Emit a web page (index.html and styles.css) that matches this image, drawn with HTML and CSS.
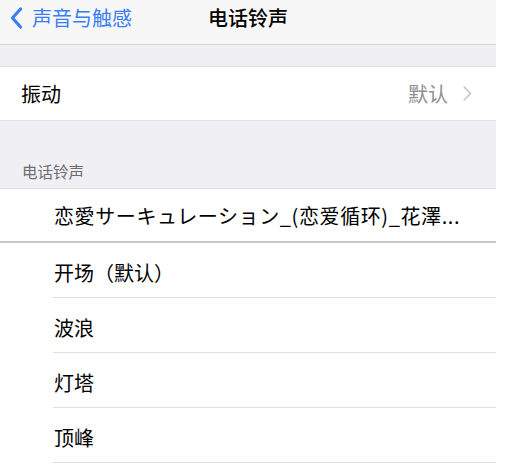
FILE: index.html
```html
<!DOCTYPE html>
<html lang="zh-CN">
<head>
<meta charset="utf-8">
<link rel="stylesheet" href="styles.css">
</head>
<body>
<div class="screen">
  <header class="nav">
    <div class="back">
      <svg class="back-icon" width="13" height="22" viewBox="0 0 13 22"><path d="M10.5 2 L2.5 11 L10.5 20" fill="none" stroke="#3a7ef6" stroke-width="3.2" stroke-linecap="round" stroke-linejoin="round"/></svg>
      <span class="back-text">声音与触感</span>
    </div>
    <div class="title">电话铃声</div>
  </header>
  <div class="spacer"></div>
  <div class="group single">
    <div class="row vib">
      <span class="label">振动</span>
      <span class="value">默认</span>
      <svg class="chev" width="9" height="15" viewBox="0 0 9 15"><path d="M1.2 1 L7.5 7.5 L1.2 14" fill="none" stroke="#c4c4c9" stroke-width="1.6" stroke-linecap="round" stroke-linejoin="round"/></svg>
    </div>
  </div>
  <div class="section-head">电话铃声</div>
  <div class="group list">
    <div class="item first"><span class="item-text wide">恋愛サーキュレーション_(恋爱循环)_花澤...</span></div>
    <div class="item"><span class="item-text">开场（默认）</span></div>
    <div class="item"><span class="item-text">波浪</span></div>
    <div class="item"><span class="item-text">灯塔</span></div>
    <div class="item"><span class="item-text">顶峰</span></div>
  </div>
</div>
</body>
</html>
```

FILE: styles.css
```css
* { box-sizing: border-box; }
html, body {
  margin: 0;
  padding: 0;
  background: #ffffff;
}
body {
  width: 505px;
  height: 468px;
  overflow: hidden;
  font-family: "Noto Sans CJK SC", "Noto Sans", sans-serif;
  color: #000;
}
.screen {
  width: 496px;
  background: #efeff4;
  display: flex;
  flex-direction: column;
}
.nav {
  height: 45px;
  background: #f7f7f7;
  border-bottom: 1px solid #d6d6da;
  display: flex;
  align-items: flex-start;
  position: relative;
}
.back {
  display: flex;
  align-items: center;
  padding-left: 10px;
  padding-top: 7px;
  gap: 9px;
}
.back-icon { display: block; }
.back-text {
  color: #3a7ef6;
  font-size: 20px;
  line-height: 22px;
}
.title {
  position: absolute;
  left: 0;
  right: 0;
  top: 7px;
  text-align: center;
  font-size: 20px;
  line-height: 22px;
  font-weight: 500;
  pointer-events: none;
}
.spacer { height: 21px; }
.group {
  background: #fff;
  border-top: 1px solid #e0e0e4;
  border-bottom: 1px solid #e0e0e4;
}
.row {
  height: 53px;
  display: flex;
  align-items: center;
  padding: 0 24px 0 21px;
  font-size: 20px;
}
.label { flex: 1; }
.value {
  color: #8e8e93;
  margin-right: 15px;
}
.chev { display: block; }
.section-head {
  height: 67px;
  padding: 40px 0 0 22px;
  font-size: 15.5px;
  line-height: 20px;
  color: #6d6d72;
}
.list { border-bottom: none; }
.item {
  height: 55px;
  display: flex;
  align-items: center;
  padding-left: 54px;
  padding-top: 4px;
  font-size: 20px;
  position: relative;
}
.item::after {
  content: "";
  position: absolute;
  left: 53px;
  right: 0;
  bottom: 0;
  height: 1px;
  background: #e0e0e4;
}
.item.first {
  height: 54px;
  padding-top: 0;
  border-bottom: 2px solid #c8c8cc;
}
.item.first::after { display: none; }
.item-text { white-space: nowrap; }
.item-text.wide { letter-spacing: 0.6px; }
```
